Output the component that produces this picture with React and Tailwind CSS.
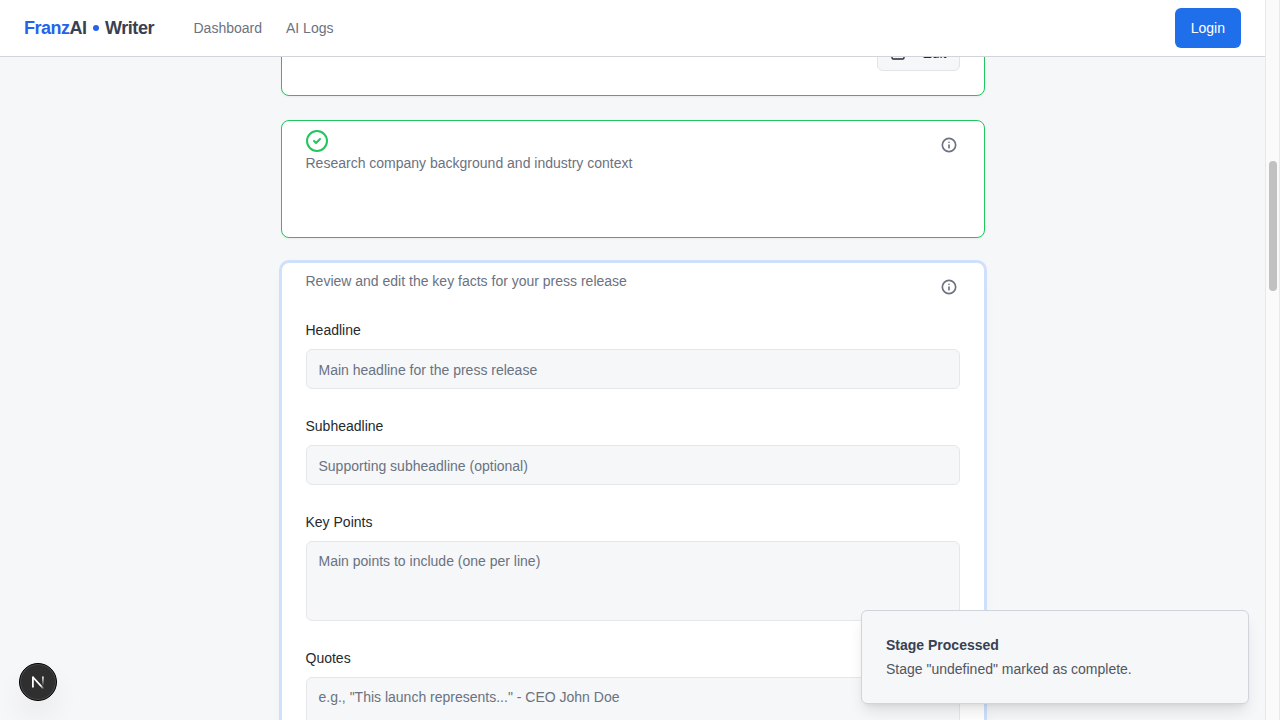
import { CircleCheck, Info, SquarePen } from "lucide-react";

function Header() {
  return (
    <header className="flex h-[57px] shrink-0 items-center justify-between border-b border-[#d1d5db] bg-white pr-6 pl-6">
      <div className="flex items-center">
        <div className="flex w-[169.5px] items-center text-lg font-bold tracking-[-0.5px] whitespace-nowrap text-[#374151]">
          <span className="text-[#2563eb]">Franz</span>
          <span>AI</span>
          <span className="mr-[6px] ml-[6px] size-[6.5px] rounded-full bg-[#2563eb]" />
          <span className="tracking-[-0.45px]">Writer</span>
        </div>
        <nav className="flex gap-6 text-sm text-[#6b7280]">
          <a>Dashboard</a>
          <a>AI Logs</a>
        </nav>
      </div>
      <button className="h-10 rounded-md bg-[#1f6feb] px-4 text-sm text-white">Login</button>
    </header>
  );
}

function InfoIcon() {
  return <Info strokeWidth={2.5} className="size-4 shrink-0 text-[#6b7280]" />;
}

function Field({ label, placeholder, multiline }) {
  return (
    <div className="flex flex-col">
      <label className="text-sm leading-[14px] text-[#24292f]">{label}</label>
      {multiline ? (
        <textarea
          placeholder={placeholder}
          className="mt-3 block h-20 w-full resize-none rounded-md border border-[#e5e7eb] bg-[#f5f7f9] px-3 py-[9px] text-sm placeholder:text-[#6b7280]"
        />
      ) : (
        <input
          placeholder={placeholder}
          className="mt-3 h-10 w-full rounded-md border border-[#e5e7eb] bg-[#f5f7f9] px-3 pt-0.5 text-sm placeholder:text-[#6b7280]"
        />
      )}
    </div>
  );
}

function Toast() {
  return (
    <div className="absolute right-[31px] bottom-4 flex h-[94px] w-[388px] flex-col justify-center gap-1 rounded-md border border-[#d1d5db] bg-[#f5f7f9] px-6 text-sm text-[#374151] shadow-lg">
      <div className="font-bold">Stage Processed</div>
      <div className="text-[#52565e]">Stage "undefined" marked as complete.</div>
    </div>
  );
}

function DevBadge() {
  return (
    <div className="absolute top-[663px] left-[19px] flex size-[38px] items-center justify-center rounded-full border border-black bg-[#2f2f2f] shadow-[inset_0_0_0_1px_#4b4b4b,0_16px_32px_-8px_rgba(0,0,0,0.16)]">
      <svg width="14" height="14" viewBox="0 0 14 14" fill="none">
        <defs>
          <linearGradient id="diagonal" x1="5" y1="5" x2="13" y2="14" gradientUnits="userSpaceOnUse">
            <stop stopColor="#fff" />
            <stop offset="0.6" stopColor="#fff" />
            <stop offset="1" stopColor="#fff" stopOpacity="0" />
          </linearGradient>
          <linearGradient id="stem" x1="12" y1="1" x2="12" y2="11" gradientUnits="userSpaceOnUse">
            <stop stopColor="#fff" />
            <stop offset="1" stopColor="#fff" stopOpacity="0" />
          </linearGradient>
        </defs>
        <path d="M1.8 2L12.6 13.8" stroke="url(#diagonal)" strokeWidth="1.8" />
        <path d="M1.9 12.5V1.4" stroke="#fff" strokeWidth="1.8" />
        <path d="M11.9 1.4V12" stroke="url(#stem)" strokeWidth="1.7" />
      </svg>
    </div>
  );
}

export default function App() {
  return (
    <div className="relative flex h-[720px] w-[1280px] overflow-hidden bg-[#f5f7f9] font-['Liberation_Sans',Arial,sans-serif]">
      <div className="flex min-w-0 flex-1 flex-col">
        <Header />
        <main className="flex min-h-0 flex-1 flex-col items-center overflow-hidden">
          <div className="-mt-16 flex w-[704px] shrink-0 flex-col gap-6">
            <section className="flex h-[103px] items-end justify-end rounded-lg border border-[#22c55e] bg-white p-6 shadow-[0_1px_2px_rgba(0,0,0,0.05)]">
              <button className="flex h-9 items-center rounded-md border border-[#e1e4e8] bg-[#f5f7f9] px-3 text-sm text-[#24292f]">
                <SquarePen className="mr-4 size-4" />
                Edit
              </button>
            </section>

            <section className="flex h-[118px] items-start justify-between rounded-lg border border-[#22c55e] bg-white px-6 pt-2 shadow-[0_1px_2px_rgba(0,0,0,0.05)]">
              <div>
                <CircleCheck className="size-6 -ml-px text-[#22c55e]" />
                <p className="text-sm text-[#6b7280]">Research company background and industry context</p>
              </div>
              <div className="mt-2 mr-[3px]">
                <InfoIcon />
              </div>
            </section>

            <section className="h-[600px] rounded-lg border border-[#cfe0fb] bg-white px-6 pt-2 shadow-[0_0_0_2px_#cfe0fb,0_10px_15px_-3px_rgba(0,0,0,0.05)]">
              <div className="flex h-[52px] items-start justify-between">
                <p className="text-sm text-[#6b7280]">Review and edit the key facts for your press release</p>
                <div className="mt-2 mr-[3px]">
                  <InfoIcon />
                </div>
              </div>
              <div className="flex flex-col gap-[30px]">
                <Field label="Headline" placeholder="Main headline for the press release" />
                <Field label="Subheadline" placeholder="Supporting subheadline (optional)" />
                <Field label="Key Points" placeholder="Main points to include (one per line)" multiline />
                <Field label="Quotes" placeholder={'e.g., "This launch represents..." - CEO John Doe'} multiline />
              </div>
            </section>
          </div>
        </main>
      </div>
      <div className="flex w-[15px] shrink-0 justify-center border-x border-[#e8e8e8] bg-[#fafafa] pt-[161px]">
        <div className="h-[130px] w-2 rounded-full bg-[#c1c1c1]" />
      </div>
      <Toast />
      <DevBadge />
    </div>
  );
}
